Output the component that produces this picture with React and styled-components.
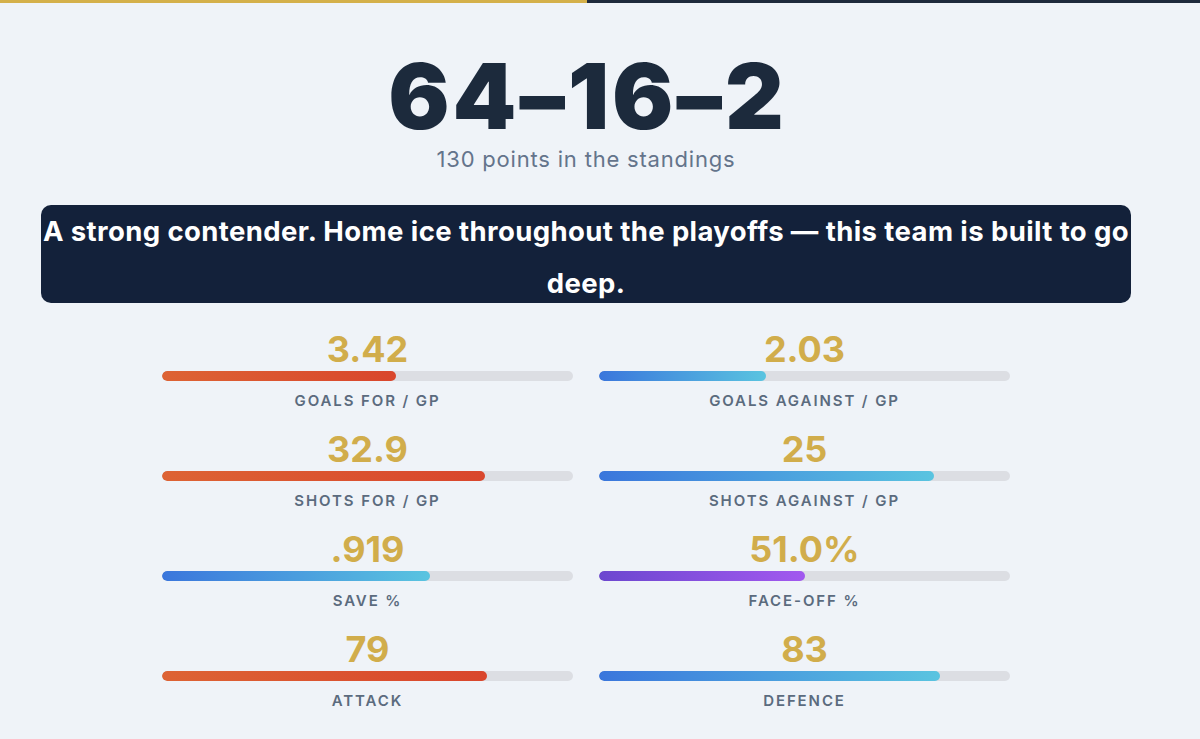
import styled, { createGlobalStyle } from "styled-components";

const GlobalStyle = createGlobalStyle`
  body {
    margin: 0;
    background: #eff3f8;
    font-family: Inter, "Noto Sans", sans-serif;
  }
`;

const TopBar = styled.div`
  height: 3px;
  background: #1e2a3c;
`;

const TopBarFill = styled.div`
  height: 100%;
  background: #d4b04a;
`;

const Page = styled.main`
  width: 1172px;
  display: flex;
  flex-direction: column;
  align-items: center;
  padding-top: 50px;
`;

const Record = styled.h1`
  margin: 0;
  padding-left: 3px;
  font-size: 91px;
  line-height: 86px;
  font-weight: 900;
  letter-spacing: 3px;
  color: #1c2a3c;
`;

const Points = styled.p`
  margin: 5px 0 0;
  font-size: 22px;
  line-height: 30px;
  letter-spacing: 0.8px;
  color: #64748b;
`;

const Verdict = styled.div`
  margin-top: 31px;
  width: 1090px;
  height: 98px;
  background: #13213a;
  border-radius: 10px;
  color: #ffffff;
  font-size: 27.5px;
  font-weight: 700;
  letter-spacing: 0.4px;
  line-height: 52px;
  text-align: center;
`;

const StatGrid = styled.section`
  margin-top: 26px;
  display: grid;
  grid-template-columns: 411px 411px;
  column-gap: 26px;
  row-gap: 18px;
`;

const Stat = styled.div`
  display: flex;
  flex-direction: column;
  align-items: center;
`;

const Value = styled.div`
  font-size: 36px;
  line-height: 40px;
  font-weight: 700;
  color: #d1ad4b;
`;

const Track = styled.div`
  margin-top: 2px;
  width: 100%;
  height: 10px;
  border-radius: 5px;
  background: #dcdee3;
  overflow: hidden;
`;

const gradients = {
  attack: "linear-gradient(90deg, #dd6334, #d9462c)",
  defence: "linear-gradient(90deg, #3a76dc, #5ac4e0)",
  neutral: "linear-gradient(90deg, #6c47cf, #a259ef)",
};

const Fill = styled.div`
  height: 100%;
  border-radius: 5px;
  background: ${(p) => gradients[p.$tone]};
`;

const Label = styled.div`
  margin-top: 10px;
  font-size: 15px;
  line-height: 20px;
  font-weight: 600;
  letter-spacing: 1.9px;
  color: #5b6b7e;
  text-transform: uppercase;
`;

const stats = [
  { value: "3.42", label: "Goals for / GP", pct: 57, tone: "attack" },
  { value: "2.03", label: "Goals against / GP", pct: 40.6, tone: "defence" },
  { value: "32.9", label: "Shots for / GP", pct: 78.6, tone: "attack" },
  { value: "25", label: "Shots against / GP", pct: 81.5, tone: "defence" },
  { value: ".919", label: "Save %", pct: 65.2, tone: "defence" },
  { value: "51.0%", label: "Face-off %", pct: 50.1, tone: "neutral" },
  { value: "79", label: "Attack", pct: 79, tone: "attack" },
  { value: "83", label: "Defence", pct: 83, tone: "defence" },
];

const App = () => {
  return (
    <>
      <GlobalStyle />
      <TopBar>
        <TopBarFill style={{ width: "587px" }} />
      </TopBar>
      <Page>
        <Record>64–16–2</Record>
        <Points>130 points in the standings</Points>
        <Verdict>
          A strong contender. Home ice throughout the playoffs — this team is
          built to go deep.
        </Verdict>
        <StatGrid>
          {stats.map((s) => (
            <Stat key={s.label}>
              <Value>{s.value}</Value>
              <Track>
                <Fill $tone={s.tone} style={{ width: `${s.pct}%` }} />
              </Track>
              <Label>{s.label}</Label>
            </Stat>
          ))}
        </StatGrid>
      </Page>
    </>
  );
};

export default App;
